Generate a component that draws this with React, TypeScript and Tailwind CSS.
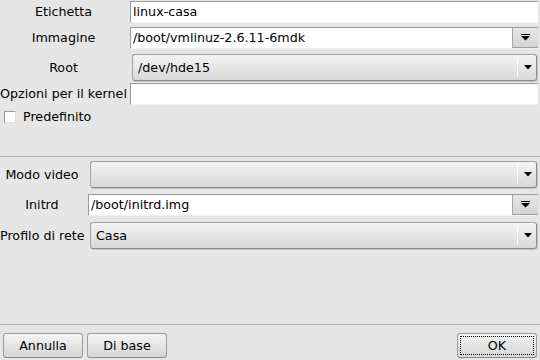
const font = "font-['DejaVu_Sans','Liberation_Sans',sans-serif]";

function TextField({ value, className = "" }: { value?: string; className?: string }) {
  return (
    <div
      className={`h-[22px] flex items-center bg-white border border-[#9a9a9a] border-b-[#f3f3f3] border-r-[#e2e2e2] pl-[2px] ${className}`}
    >
      {value}
    </div>
  );
}

function EditCombo({ value, className = "" }: { value: string; className?: string }) {
  return (
    <div
      className={`h-[22px] flex bg-white border border-[#9a9a9a] border-b-[#f3f3f3] border-r-[#e2e2e2] ${className}`}
    >
      <div className="flex-1 flex items-center pl-[2px]">{value}</div>
      <div className="w-[26px] flex items-center justify-center bg-gradient-to-b from-[#e6e6e6] to-[#d4d4d4] border-l border-[#a5a5a5] border-b border-b-[#9e9e9e]">
        <svg width="9" height="7" viewBox="0 0 9 7">
          <rect x="0" y="0" width="9" height="1" fill="#000" />
          <polygon points="0,2 9,2 4.5,6.5" fill="#000" />
        </svg>
      </div>
    </div>
  );
}

function Combo({ value, className = "" }: { value?: string; className?: string }) {
  return (
    <div
      className={`h-[27px] flex items-center rounded-[3px] border border-[#a0a0a0] border-b-[#8a8a8a] border-r-[#8e8e8e] bg-gradient-to-b from-[#f4f4f4] to-[#d8d8d8] shadow-[1px_1px_0_#c4c4c4] ${className}`}
    >
      <div className="flex-1 pl-[5px]">{value}</div>
      <div className="w-px h-[19px] bg-[#a8a8a8] border-r border-white mr-[3px]" />
      <div className="w-[14px] flex justify-center mr-[1px]">
        <svg width="8" height="5" viewBox="0 0 8 5">
          <polygon points="0,0 8,0 4,4.5" fill="#000" />
        </svg>
      </div>
    </div>
  );
}

function Button({ label, focused = false, className = "" }: { label: string; focused?: boolean; className?: string }) {
  return (
    <div
      className={`w-[80px] h-[25px] rounded-[3px] border border-[#9c9c9c] border-b-[#888] bg-gradient-to-b from-[#f4f4f4] to-[#d6d6d6] p-[2px] ${className}`}
    >
      <div
        className={`w-full h-full flex items-center justify-center ${focused ? "border border-dotted border-black" : ""}`}
      >
        {label}
      </div>
    </div>
  );
}

export default function App() {
  return (
    <div className={`w-[540px] h-[360px] bg-[#e6e6e6] flex flex-col text-[12.7px] text-black overflow-hidden ${font}`}>
      {/* Top: boot entry */}
      <div className="flex items-center mt-[1px]">
        <div className="w-[127px] text-center">Etichetta</div>
        <TextField value="linux-casa" className="ml-[3px] flex-1 mr-[1px]" />
      </div>
      <div className="flex items-center mt-[4px]">
        <div className="w-[127px] text-center">Immagine</div>
        <EditCombo value="/boot/vmlinuz-2.6.11-6mdk" className="ml-[3px] flex-1 mr-[1px]" />
      </div>
      <div className="flex items-center mt-[5px]">
        <div className="w-[127px] text-center">Root</div>
        <Combo value="/dev/hde15" className="ml-[5px] flex-1 mr-[3px]" />
      </div>
      <div className="flex items-center mt-[2px]">
        <div className="w-[127px] text-center whitespace-nowrap">Opzioni per il kernel</div>
        <TextField className="ml-[3px] flex-1 mr-[1px]" />
      </div>
      <div className="flex items-center h-[12px] mt-[6px] pl-[4px]">
        <div className="w-[12px] h-[12px] bg-white border border-[#9a9a9a] border-b-[#e0e0e0] border-r-[#e0e0e0]" />
        <span className="ml-[7px]">Predefinito</span>
      </div>

      <div className="mt-[33px] h-px bg-[#b6b6b6]" />

      {/* Bottom: video / initrd / profile */}
      <div className="flex items-center mt-[4px]">
        <div className="w-[84px] text-center">Modo video</div>
        <Combo className="ml-[6px] flex-1 mr-[3px]" />
      </div>
      <div className="flex items-center mt-[6px]">
        <div className="w-[84px] text-center">Initrd</div>
        <EditCombo value="/boot/initrd.img" className="ml-[4px] flex-1 mr-[1px] h-[21px]" />
      </div>
      <div className="flex items-center mt-[6px]">
        <div className="w-[84px] text-center whitespace-nowrap">Profilo di rete</div>
        <Combo value="Casa" className="ml-[6px] flex-1 mr-[3px]" />
      </div>

      <div className="mt-auto h-px bg-[#b6b6b6]" />
      <div className="flex mt-[8px] mb-[2px] px-[3px]">
        <Button label="Annulla" />
        <Button label="Di base" className="ml-[4px]" />
        <Button label="OK" focused className="ml-auto" />
      </div>
    </div>
  );
}
